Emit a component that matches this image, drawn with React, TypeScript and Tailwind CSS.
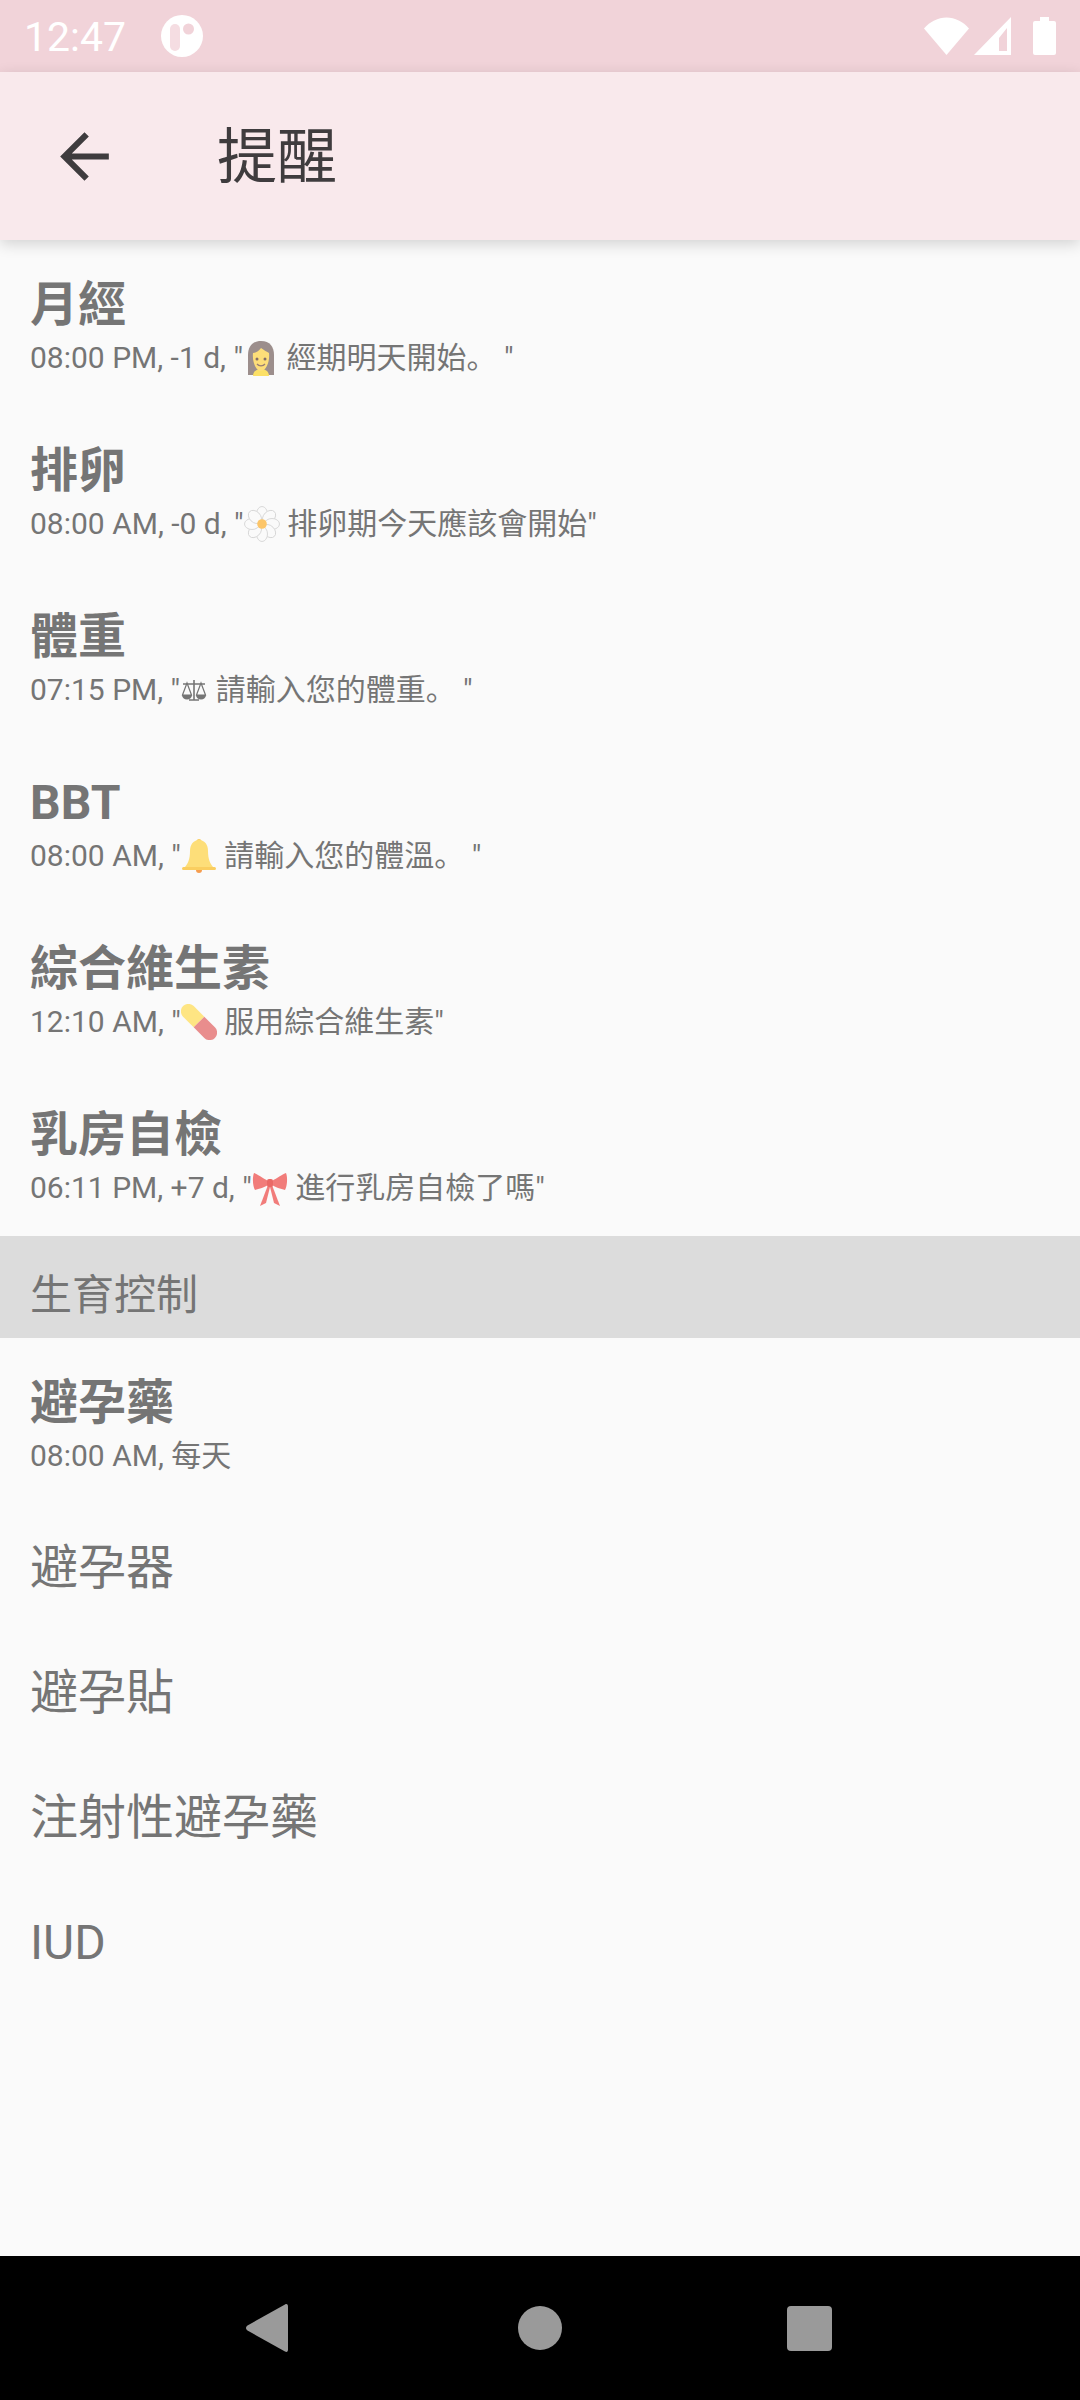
const FONT = "font-['Roboto','Noto_Sans_CJK_SC','Noto_Sans',sans-serif]";

function Woman() {
  return (
    <svg viewBox="0 0 36 36" className="w-[36px] h-[36px] opacity-75">
      <path d="M18 1C9 1 5 7 5 15v20h26V15C31 7 27 1 18 1z" fill="#7d6b68" />
      <path d="M10 36c0-4 3-7 8-7s8 3 8 7z" fill="#fdd835" />
      <path d="M18 8c3 2 6 4 8 5 1 9-3 18-8 18s-9-9-8-18c3 0 6-2 8-5z" fill="#ffd54f" />
      <circle cx="14" cy="19" r="1.5" fill="#5d4037" />
      <circle cx="22" cy="19" r="1.5" fill="#5d4037" />
      <path d="M14 24c2 2.500 6 2.500 8 0" stroke="#795548" strokeWidth="1.3" fill="none" />
    </svg>
  );
}

function Daisy() {
  const petals = [0, 45, 90, 135, 180, 225, 270, 315];
  return (
    <svg viewBox="0 0 36 36" className="w-[36px] h-[36px]">
      {petals.map((a) => (
        <ellipse key={a} cx="18" cy="8" rx="5.500" ry="7.500" fill="#fafafa" stroke="#d5d5d5" strokeWidth="0.9" transform={`rotate(${a} 18 18)`} />
      ))}
      <circle cx="18" cy="18" r="4.800" fill="#fcc568" />
    </svg>
  );
}

function Scales() {
  return (
    <svg viewBox="0 0 28 36" className="w-[28px] h-[36px]" fill="none" stroke="#757575" strokeWidth="1.6">
      <path d="M14 8v20M3 12h22M9 28h10" />
      <path d="M7 11L2.500 23h9zM21 11l-4.500 12h9z" strokeWidth="1.2" />
      <path d="M2 23a5 4.500 0 0 0 10 0zM16 23a5 4.500 0 0 0 10 0z" fill="#757575" stroke="none" />
    </svg>
  );
}

function Bell() {
  return (
    <svg viewBox="0 0 36 36" className="w-[36px] h-[36px] opacity-75">
      <circle cx="18" cy="3.500" r="2.500" fill="#fbc02d" />
      <path d="M18 2c-6 0-9 5-9 11 0 8-2 13-6 17h30c-4-4-6-9-6-17 0-6-3-11-9-11z" fill="#ffd54f" />
      <rect x="1" y="29" width="34" height="3" rx="1.500" fill="#fbc02d" />
      <path d="M15 32h6a3 3 0 0 1-6 0z" fill="#f57f17" />
    </svg>
  );
}

function Pill() {
  return (
    <svg viewBox="0 0 36 36" className="w-[36px] h-[36px] opacity-80">
      <g transform="rotate(45 18 18)">
        <path d="M18 10.500H3a7.500 7.500 0 0 0 0 15h15z" fill="#ffe066" />
        <path d="M18 10.500h15a7.500 7.500 0 0 1 0 15H18z" fill="#e57373" />
      </g>
    </svg>
  );
}

function Bow() {
  return (
    <svg viewBox="0 0 36 36" className="w-[36px] h-[36px] opacity-75">
      <path d="M16 15L8 36l6-3 4-16z" fill="#ef5350" />
      <path d="M20 15l8 21-6-3-4-16z" fill="#ef5350" />
      <path d="M16 11C11 8 5 4 2 3c-2 5-1 14 1 17 4-1 10-3 13-5z" fill="#ef5350" />
      <path d="M20 11c5-3 11-7 14-8 2 5 1 14-1 17-4-1-10-3-13-5z" fill="#ef5350" />
      <rect x="15" y="9" width="6" height="8" rx="2" fill="#e53935" />
    </svg>
  );
}

const reminders = [
  { title: "月經", pre: '08:00 PM, -1 d, "', icon: <Woman />, post: ' 經期明天開始。 "' },
  { title: "排卵", pre: '08:00 AM, -0 d, "', icon: <Daisy />, post: ' 排卵期今天應該會開始"' },
  { title: "體重", pre: '07:15 PM, "', icon: <Scales />, post: ' 請輸入您的體重。 "' },
  { title: "BBT", pre: '08:00 AM, "', icon: <Bell />, post: ' 請輸入您的體溫。 "' },
  { title: "綜合維生素", pre: '12:10 AM, "', icon: <Pill />, post: ' 服用綜合維生素"' },
  { title: "乳房自檢", pre: '06:11 PM, +7 d, "', icon: <Bow />, post: ' 進行乳房自檢了嗎"' },
];

const plainRows = ["避孕器", "避孕貼", "注射性避孕藥", "IUD"];

function ReminderRow({ title, children }: { title: string; children: React.ReactNode }) {
  return (
    <div className="h-[166px] px-[30px] pt-[37px] flex flex-col">
      <div className="text-[48px] leading-[56px] font-bold whitespace-nowrap">{title}</div>
      <div className="mt-[5px] text-[30px] leading-[40px] whitespace-pre flex items-center">{children}</div>
    </div>
  );
}

export default function App() {
  return (
    <div className={`${FONT} w-[1080px] h-[2400px] flex flex-col bg-[#fafafa] text-[#757575] overflow-hidden`}>
      {/* status bar */}
      <div className="h-[72px] shrink-0 bg-[#f1d3d9] flex items-center pl-[24px] pr-[24px] text-white">
        <span className="text-[41px] leading-none pt-[3px]">12:47</span>
        <svg viewBox="0 0 42 42" className="w-[42px] h-[42px] ml-[35px]">
          <circle cx="21" cy="21" r="21" fill="#fff" />
          <rect x="9" y="9" width="10" height="27" rx="5" fill="#f5dde2" />
          <circle cx="27.500" cy="14" r="5.500" fill="#f1d3d9" />
        </svg>
        <div className="ml-auto flex items-center">
          <svg viewBox="0 0 45 38" className="w-[45px] h-[38px]">
            <path d="M22.500 38L0 11.500C6 4.500 14 0.500 22.500 0.500S39 4.500 45 11.500z" fill="#fff" />
          </svg>
          <svg viewBox="0 0 37 38" className="w-[37px] h-[38px] ml-[5px]">
            <path fillRule="evenodd" d="M37 0v38H0zM33 11L25 21v13h8z" fill="#fff" />
          </svg>
          <svg viewBox="0 0 23 38" className="w-[23px] h-[38px] ml-[22px]">
            <path d="M7 0h9v4h5a2 2 0 0 1 2 2v30a2 2 0 0 1-2 2H2a2 2 0 0 1-2-2V6a2 2 0 0 1 2-2h5z" fill="#fff" />
          </svg>
        </div>
      </div>

      {/* app bar */}
      <div className="relative z-10 h-[168px] shrink-0 bg-[#f9e9ec] flex items-center shadow-[0_4px_14px_rgba(0,0,0,0.16)]">
        <svg viewBox="0 0 24 24" className="w-[73px] h-[73px] ml-[48px] shrink-0" fill="#3f3c3e">
          <path d="M20 11H7.830l5.590-5.590L12 4l-8 8 8 8 1.410-1.410L7.830 13H20v-2z" />
        </svg>
        <h1 className="ml-[96px] pt-[4px] text-[60px] leading-none font-normal text-[#3f3c3e]">提醒</h1>
      </div>

      {/* list */}
      <div className="flex-1">
        {reminders.map((r) => (
          <ReminderRow key={r.title} title={r.title}>
            <span>{r.pre}</span>
            <span className="inline-flex justify-center">{r.icon}</span>
            <span>{r.post}</span>
          </ReminderRow>
        ))}

        <div className="h-[102px] bg-[#dcdcdc] px-[30px] pt-[32px] text-[42px] leading-[56px]">生育控制</div>

        <ReminderRow title="避孕藥">08:00 AM, 每天</ReminderRow>

        {plainRows.map((label) => (
          <div key={label} className="h-[125px] px-[30px] pt-[3px] flex items-center text-[48px]">
            {label}
          </div>
        ))}
      </div>

      {/* nav bar */}
      <div className="h-[144px] shrink-0 bg-black flex items-center pl-[246px]">
        <svg viewBox="0 0 42 48" className="w-[42px] h-[48px]">
          <path d="M39 0.500L1.500 21.500c-2 1.300-2 3.700 0 5L39 47.500c2 1 3 0 3-2V2.500c0-2-1-3-3-2z" fill="#9a9a9a" />
        </svg>
        <div className="ml-[230px] w-[44px] h-[44px] rounded-full bg-[#9a9a9a]" />
        <div className="ml-[225px] w-[45px] h-[45px] rounded-[4px] bg-[#9a9a9a]" />
      </div>
    </div>
  );
}
